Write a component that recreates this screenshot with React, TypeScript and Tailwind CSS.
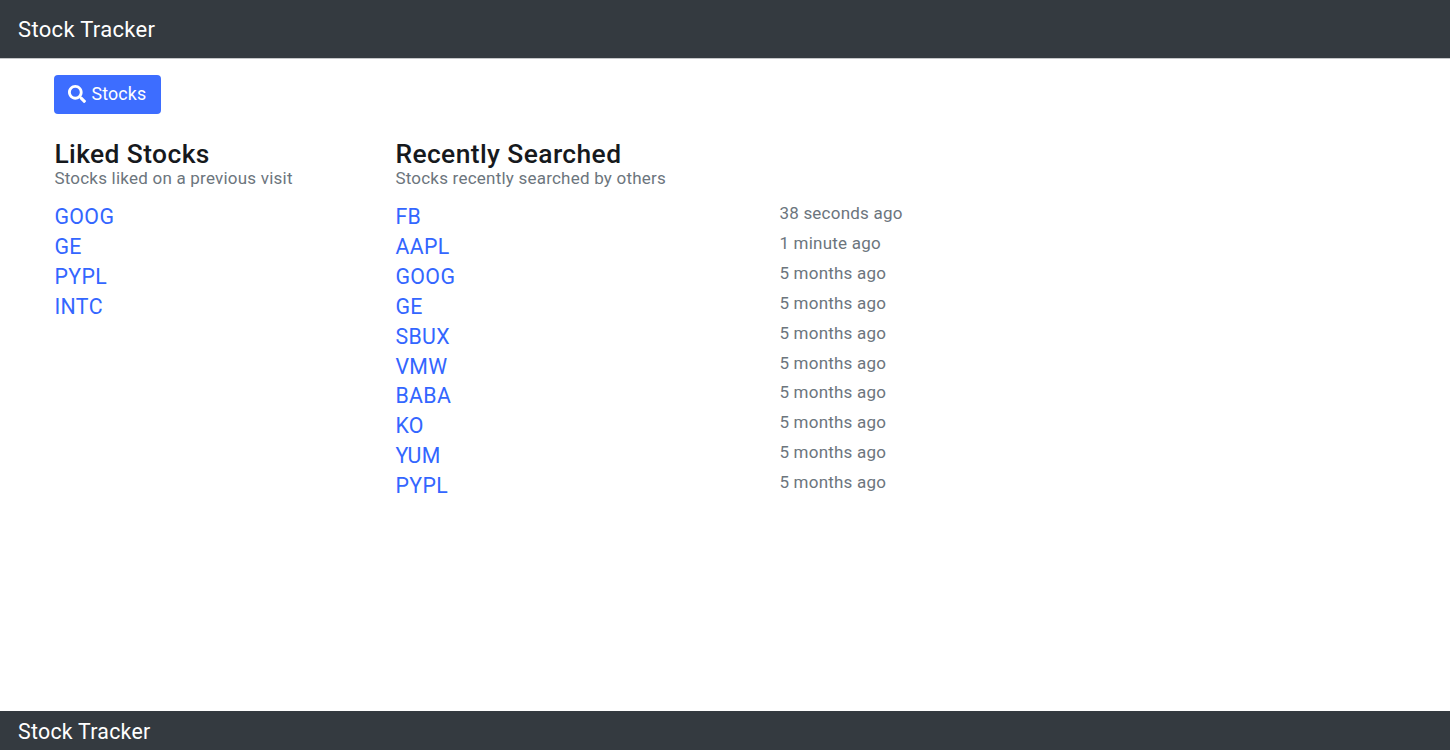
import { FaSearch } from "react-icons/fa";

const liked = ["GOOG", "GE", "PYPL", "INTC"];
const recent = [
  ["FB", "38 seconds ago"],
  ["AAPL", "1 minute ago"],
  ["GOOG", "5 months ago"],
  ["GE", "5 months ago"],
  ["SBUX", "5 months ago"],
  ["VMW", "5 months ago"],
  ["BABA", "5 months ago"],
  ["KO", "5 months ago"],
  ["YUM", "5 months ago"],
  ["PYPL", "5 months ago"],
];

function Heading({ title, subtitle }: { title: string; subtitle: string }) {
  return (
    <div className="mb-3 whitespace-nowrap">
      <h2 className="pt-px text-[26.4px] leading-[28px] font-medium tracking-[0.4px] text-[#16191d]">{title}</h2>
      <p className="text-[17px] leading-5 tracking-[0.22px] text-[#6c757d]">{subtitle}</p>
    </div>
  );
}

export default function App() {
  return (
    <div className="flex h-[750px] flex-col bg-white font-['Roboto',sans-serif]">
      <header className="flex h-[59px] items-center border-b border-[#c4c6c8] bg-[#343a40] pl-[18px] text-[22px] tracking-[0.32px] text-white">
        Stock Tracker
      </header>
      <main className="flex-1 pt-4 pl-[54.4px]">
        <button className="flex h-[39px] w-[107px] items-center gap-[5px] rounded bg-[#3d6dff] pl-[14px] text-[17.8px] tracking-[0.2px] text-white">
          <FaSearch className="mb-[2px] size-[18px]" />
          Stocks
        </button>
        <div className="mt-[25px] flex">
          <section className="w-[341px]">
            <Heading title="Liked Stocks" subtitle="Stocks liked on a previous visit" />
            <ul className="pt-[0.3px]">
              {liked.map((s) => (
                <li key={s} className="h-[29.87px] text-[21.3px] leading-[34px] tracking-[0.4px] text-[#3366ff]">{s}</li>
              ))}
            </ul>
          </section>
          <section className="w-[600px]">
            <Heading title="Recently Searched" subtitle="Stocks recently searched by others" />
            <ul className="pt-[0.3px]">
              {recent.map(([s, t]) => (
                <li key={s} className="flex h-[29.87px]">
                  <span className="w-[384px] text-[21.3px] leading-[34px] tracking-[0.4px] text-[#3366ff]">{s}</span>
                  <span className="text-[17px] leading-[27px] tracking-[0.22px] text-[#6c757d]">{t}</span>
                </li>
              ))}
            </ul>
          </section>
        </div>
      </main>
      <footer className="flex h-[39px] items-center bg-[#343a40] pt-[2px] pl-[18px] text-[21.3px] tracking-[0.28px] text-white">
        Stock Tracker
      </footer>
    </div>
  );
}
